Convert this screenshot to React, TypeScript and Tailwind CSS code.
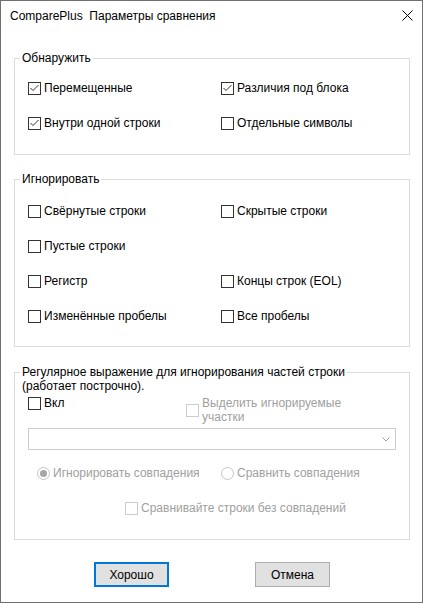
import React from "react";

function Box({ checked = false, disabled = false }: { checked?: boolean; disabled?: boolean }) {
  return (
    <span
      className={
        disabled
          ? "w-[13px] h-[13px] shrink-0 border border-[#cccccc] bg-white flex items-center justify-center"
          : "w-[13px] h-[13px] shrink-0 border border-[#333333] bg-white flex items-center justify-center"
      }
    >
      {checked && (
        <svg width="11" height="11" viewBox="0 0 11 11">
          <path d="M1.5 5 L4 7.5 L9.5 2" stroke="#333333" strokeWidth="1" fill="none" />
        </svg>
      )}
    </span>
  );
}

function Check({ label, checked = false, disabled = false }: { label: string; checked?: boolean; disabled?: boolean }) {
  return (
    <div className="flex items-center gap-[3px] h-[13px]">
      <Box checked={checked} disabled={disabled} />
      <span className={disabled ? "leading-[13px] whitespace-nowrap text-[#a0a0a0]" : "leading-[13px] whitespace-nowrap"}>
        {label}
      </span>
    </div>
  );
}

function Radio({ label, checked = false }: { label: string; checked?: boolean }) {
  return (
    <div className="flex items-center gap-[3px] h-[13px]">
      <span className="w-[13px] h-[13px] shrink-0 rounded-full border border-[#c4c4c4] bg-white flex items-center justify-center">
        {checked && <span className="w-[7px] h-[7px] rounded-full bg-[#a6a6a6]" />}
      </span>
      <span className="leading-[13px] whitespace-nowrap text-[#a0a0a0]">{label}</span>
    </div>
  );
}

export default function App() {
  return (
    <div className="w-[423px] h-[603px] bg-white border border-[#6f6f6f] flex flex-col font-['Liberation_Sans',Arial,sans-serif] text-[12px] text-black leading-[14px]">
      <div className="h-[30px] shrink-0 flex items-center justify-between pl-[9px] pr-[9px]">
        <span className="whitespace-pre">ComparePlus  Параметры сравнения</span>
        <svg width="11" height="11" viewBox="0 0 11 11" className="-mt-[1px]">
          <path d="M0.5 0.5 L10.5 10.5 M10.5 0.5 L0.5 10.5" stroke="#000000" strokeWidth="1" fill="none" />
        </svg>
      </div>

      <div className="pl-[13px] pr-[12px] flex flex-col">
        <fieldset className="mt-[19px] border border-[#dcdcdc]">
          <legend className="ml-[5px] px-[2px] leading-[16px]">Обнаружить</legend>
          <div className="pt-[16px] pb-[24px] pl-[13px] grid grid-cols-[193px_1fr] gap-y-[22px]">
            <Check label="Перемещенные" checked />
            <Check label="Различия под блока" checked />
            <Check label="Внутри одной строки" checked />
            <Check label="Отдельные символы" />
          </div>
        </fieldset>

        <fieldset className="mt-[16px] border border-[#dcdcdc]">
          <legend className="ml-[5px] px-[2px] leading-[16px]">Игнорировать</legend>
          <div className="pt-[18px] pb-[23px] pl-[13px] grid grid-cols-[193px_1fr] gap-y-[22px]">
            <Check label="Свёрнутые строки" />
            <Check label="Скрытые строки" />
            <Check label="Пустые строки" />
            <div className="h-[13px]" />
            <Check label="Регистр" />
            <Check label="Концы строк (EOL)" />
            <Check label="Изменённые пробелы" />
            <Check label="Все пробелы" />
          </div>
        </fieldset>

        <fieldset className="mt-[18px] border border-[#dcdcdc]">
          <legend className="ml-[5px] px-[2px] leading-[14px]">
            Регулярное выражение для игнорирования частей строки
          </legend>
          <div className="pb-[24px] flex flex-col">
            <div className="pl-[7px] leading-[14px]">(работает построчно).</div>
            <div className="mt-[3px] ml-[13px] grid grid-cols-[158px_1fr] items-start">
              <div className="h-[14px] flex items-center">
                <Check label="Вкл" />
              </div>
              <div className="flex items-center gap-[3px]">
                <Box disabled />
                <span className="leading-[14px] text-[#a0a0a0]">
                  Выделить игнорируемые
                  <br />
                  участки
                </span>
              </div>
            </div>
            <div className="mt-[4px] ml-[13px] w-[368px] h-[22px] border border-[#cccccc] bg-white flex items-center justify-end pr-[5px]">
              <svg width="8" height="5" viewBox="0 0 8 5">
                <path d="M0.5 0.5 L4 4 L7.5 0.5" stroke="#a0a0a0" strokeWidth="1" fill="none" />
              </svg>
            </div>
            <div className="mt-[17px] ml-[13px] grid grid-cols-[193px_1fr]">
              <div className="pl-[9px]">
                <Radio label="Игнорировать совпадения" checked />
              </div>
              <Radio label="Сравнить совпадения" />
            </div>
            <div className="mt-[22px] ml-[110px]">
              <Check label="Сравнивайте строки без совпадений" disabled />
            </div>
          </div>
        </fieldset>

        <div className="mt-[22px] flex justify-center gap-[86px]">
          <button className="w-[75px] h-[25px] border-2 border-[#0078d7] bg-[#e1e1e1] flex items-center justify-center leading-[14px]">
            Хорошо
          </button>
          <button className="w-[75px] h-[25px] border border-[#adadad] bg-[#e1e1e1] flex items-center justify-center leading-[14px]">
            Отмена
          </button>
        </div>
      </div>
    </div>
  );
}
